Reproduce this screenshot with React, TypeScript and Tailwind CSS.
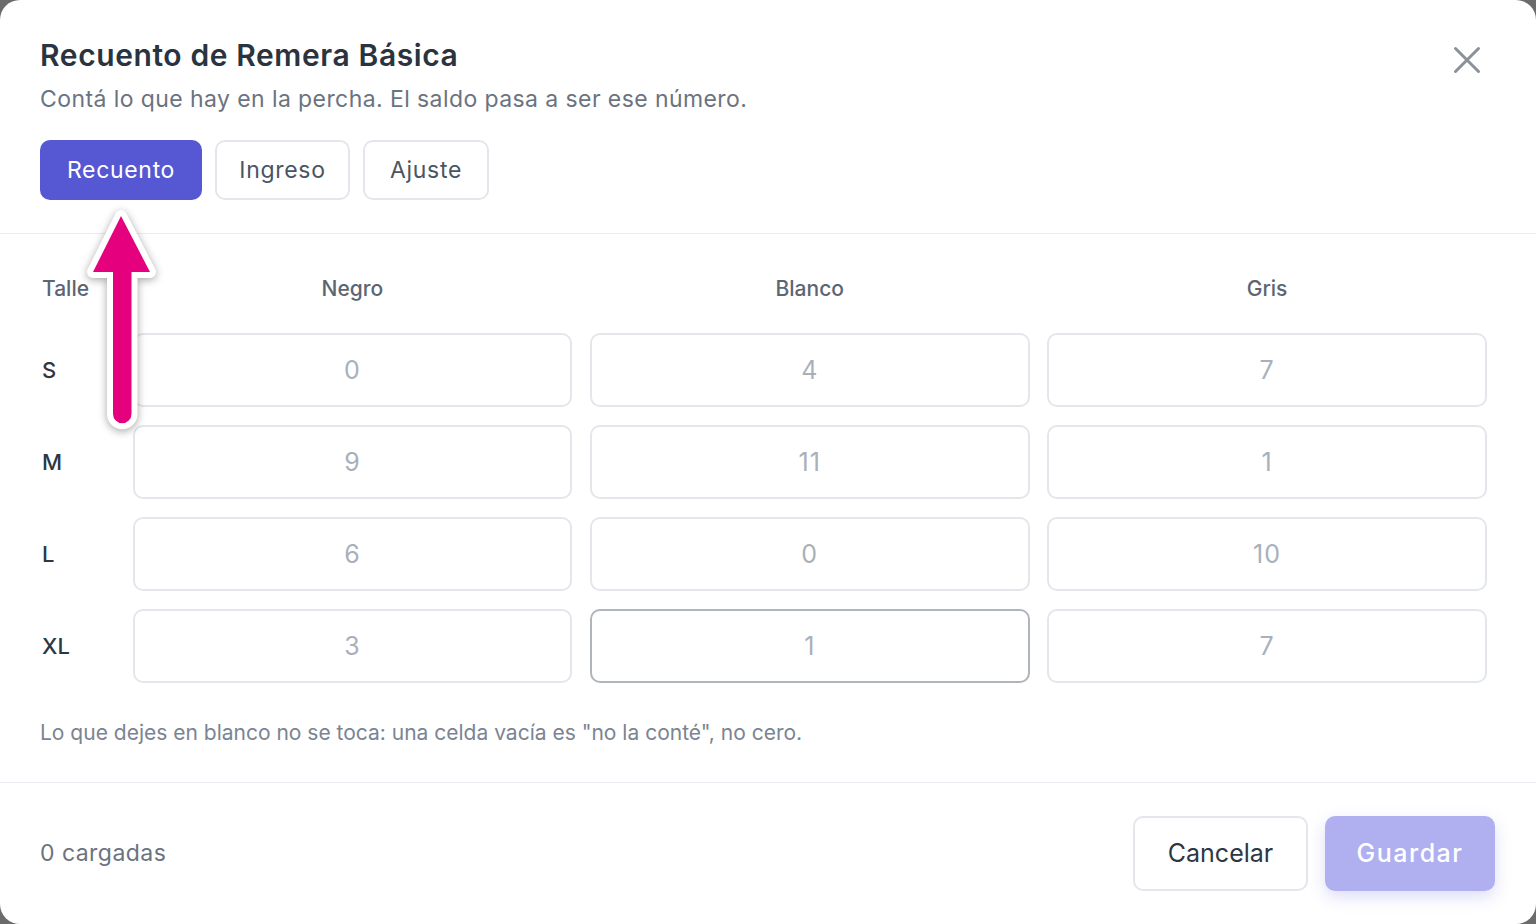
const FONT = { fontFamily: "Inter, 'Open Sans', sans-serif" };

const COLORS = ["Negro", "Blanco", "Gris"];
const ROWS: { size: string; values: string[] }[] = [
  { size: "S", values: ["0", "4", "7"] },
  { size: "M", values: ["9", "11", "1"] },
  { size: "L", values: ["6", "0", "10"] },
  { size: "XL", values: ["3", "1", "7"] },
];

function Arrow() {
  return (
    <svg
      className="pointer-events-none absolute left-0 top-0 h-[460px] w-[200px]"
      viewBox="0 0 200 460"
      style={{ filter: "drop-shadow(0 2px 4px rgba(0,0,0,0.35))" }}
    >
      <path
        d="M121 216 L150 272 L131.5 272 L131.5 414 A9.25 9.25 0 0 1 113 414 L113 272 L93 272 Z"
        fill="#e5007d"
        stroke="#ffffff"
        strokeWidth={12}
        strokeLinejoin="round"
        paintOrder="stroke"
      />
    </svg>
  );
}

export default function App() {
  return (
    <div className="h-screen w-full bg-[#6b6b6b]" style={FONT}>
      <div className="relative flex h-full flex-col overflow-hidden rounded-[20px] bg-white">
        {/* header */}
        <div className="relative border-b border-[#ebebf1] px-10 pb-[33px] pt-[37px]">
          <h1 className="text-[30px] font-semibold leading-[36px] tracking-[0.02em] text-[#2a3441]">
            Recuento de Remera Básica
          </h1>
          <p className="mt-[12px] text-[23px] leading-[28px] tracking-[0.018em] text-[#6b7380]">
            Contá lo que hay en la percha. El saldo pasa a ser ese número.
          </p>
          <div className="mt-[27px] flex gap-[13px]">
            <button className="h-[60px] w-[162px] rounded-[10px] bg-[#5558d2] text-[23px] tracking-[0.03em] text-white">
              Recuento
            </button>
            <button className="h-[60px] w-[135px] rounded-[10px] border-2 border-[#e3e7ec] bg-white text-[23px] tracking-[0.03em] text-[#4a5562]">
              Ingreso
            </button>
            <button className="h-[60px] w-[126px] rounded-[10px] border-2 border-[#e3e7ec] bg-white text-[23px] tracking-[0.03em] text-[#4a5562]">
              Ajuste
            </button>
          </div>
          <button className="absolute right-[54px] top-[45px] text-[#8a9199]">
            <svg width="30" height="30" viewBox="0 0 30 30" fill="none" stroke="currentColor" strokeWidth={3} strokeLinecap="round">
              <path d="M3.5 3.5 L26.5 26.5 M26.5 3.5 L3.5 26.5" />
            </svg>
          </button>
        </div>

        {/* grid */}
        <div className="border-b border-[#ebebf1] pb-[35px] pl-10 pr-[49px] pt-[40px]">
          <div className="mb-[29px] grid grid-cols-[75px_1fr_1fr_1fr] gap-x-[17.5px]">
            <div className="flex h-[30px] items-center pl-[2px] text-[21px] font-medium text-[#5c6673]">Talle</div>
            {COLORS.map((c) => (
              <div key={c} className="flex h-[30px] items-center justify-center text-[21px] font-medium text-[#5c6673]">
                {c}
              </div>
            ))}
          </div>
          <div className="grid grid-cols-[75px_1fr_1fr_1fr] gap-x-[17.5px] gap-y-[18px]">
            {ROWS.map((row) => [
              <div key={row.size} className="flex h-[74px] items-center pl-[2px] text-[22px] font-medium text-[#2d3744]">
                {row.size}
              </div>,
              ...row.values.map((v, i) => {
                const focused = row.size === "XL" && i === 1;
                return (
                  <input
                    key={row.size + i}
                    placeholder={v}
                    className={
                      focused
                        ? "h-[74px] w-full rounded-[10px] border-2 border-[#b0b5bc] bg-white text-center text-[25px] tracking-[0.04em] outline-none placeholder:text-[#a9b0ba]"
                        : "h-[74px] w-full rounded-[10px] border-2 border-[#e3e7ec] bg-white text-center text-[25px] tracking-[0.04em] outline-none placeholder:text-[#a9b0ba]"
                    }
                  />
                );
              }),
            ])}
          </div>
          <p className="mt-[36px] text-[21px] leading-[28px] text-[#7a8492]">
            Lo que dejes en blanco no se toca: una celda vacía es "no la conté", no cero.
          </p>
        </div>

        {/* footer */}
        <div className="flex flex-1 items-center justify-between pl-10 pr-[41px]">
          <span className="text-[23px] tracking-[0.02em] text-[#6b7380]">0 cargadas</span>
          <div className="flex gap-[17px]">
            <button className="h-[75px] w-[175px] rounded-[10px] border-2 border-[#e3e7ec] bg-white text-[25px] text-[#2d3744]">
              Cancelar
            </button>
            <button className="h-[75px] w-[170px] rounded-[10px] bg-[#b0b0f1] text-[25px] font-medium tracking-[0.06em] text-white shadow-[0_6px_16px_rgba(120,120,230,0.25)]">
              Guardar
            </button>
          </div>
        </div>

        <Arrow />
      </div>
    </div>
  );
}
